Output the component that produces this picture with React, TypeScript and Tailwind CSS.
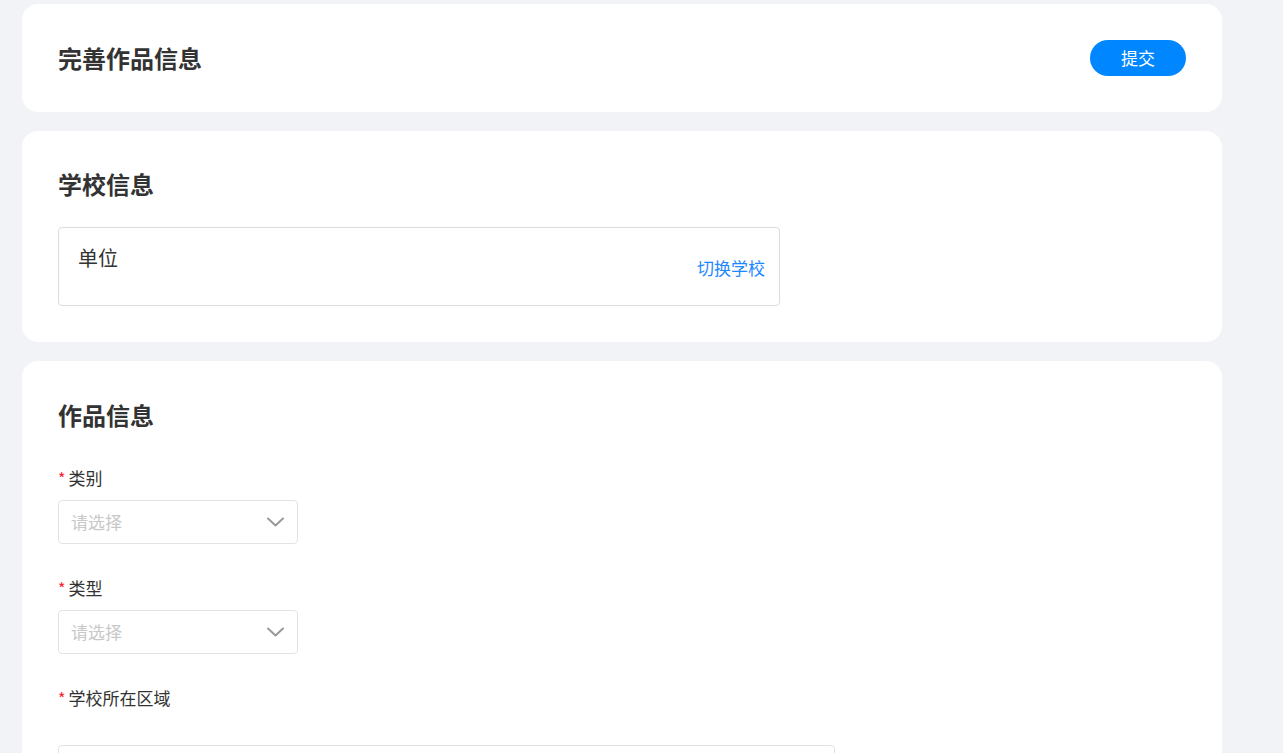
const font = { fontFamily: '"Noto Sans CJK SC", "Noto Sans", sans-serif' };

function Label({ text }: { text: string }) {
  return (
    <div className="flex items-center h-6 text-[17px] text-[#333]">
      <span className="text-[#f5222d] mr-[3px] text-base leading-none">*</span>
      {text}
    </div>
  );
}

function Chevron() {
  return (
    <svg width="17" height="10" viewBox="0 0 17 10" fill="none">
      <polyline points="1,1.5 8.5,8.5 16,1.5" stroke="#999" strokeWidth="2" strokeLinecap="round" strokeLinejoin="round" />
    </svg>
  );
}

function Select() {
  return (
    <div className="mt-[10px] w-[240px] h-[44px] border border-[#e3e3e3] rounded flex items-center justify-between pl-3 pr-[13px]">
      <span className="text-[17px] text-[#c8c8c8]">请选择</span>
      <Chevron />
    </div>
  );
}

export default function App() {
  return (
    <div className="min-h-screen bg-[#f2f3f7] pl-[22px] pt-1 pb-10" style={font}>
      <div className="w-[1200px] flex flex-col gap-[19px]">
        <section className="bg-white rounded-2xl h-[108px] px-9 flex items-center justify-between">
          <h1 className="text-2xl font-bold text-[#333]">完善作品信息</h1>
          <button className="w-24 h-9 rounded-full bg-[#0087ff] text-white text-[17px]">提交</button>
        </section>

        <section className="bg-white rounded-2xl px-9 pt-[39px] pb-9">
          <h2 className="text-2xl leading-7 font-bold text-[#333]">学校信息</h2>
          <div className="mt-[29px] w-[722px] h-[79px] border border-[#dcdcdc] rounded-sm flex justify-between pl-[19px] pr-[14px]">
            <span className="text-xl text-[#333] mt-[18px] leading-6">单位</span>
            <span className="text-[17px] text-[#1e88ff] mt-7 leading-6">切换学校</span>
          </div>
        </section>

        <section className="bg-white rounded-2xl px-9 pt-10 pb-20">
          <h2 className="text-2xl leading-7 font-bold text-[#333]">作品信息</h2>
          <div className="mt-[37px]">
            <Label text="类别" />
            <Select />
          </div>
          <div className="mt-8">
            <Label text="类型" />
            <Select />
          </div>
          <div className="mt-8">
            <Label text="学校所在区域" />
            <div className="mt-[35px] w-[777px] h-[44px] border border-[#e3e3e3] rounded" />
          </div>
        </section>
      </div>
    </div>
  );
}
